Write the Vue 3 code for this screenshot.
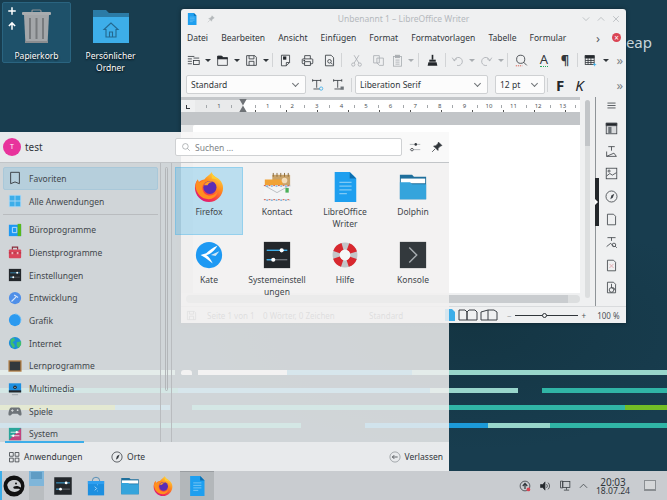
<script setup>
const ic = {
  trash: '<rect x="11" y="1" width="9" height="3" rx="1" fill="none" stroke="#8d9194" stroke-width="1.2"/><rect x="1" y="3" width="29" height="3" rx="1" fill="#a9acaf"/><path d="M3 6h25l-1.4 28H4.4z" fill="#a3a6a9"/><path d="M4 32h23v2H4z" fill="#8a8d90"/><path d="M8 9h2v21H8zM14.500 9h2v21h-2zM21 9h2v21h-2z" fill="#787b7e"/>',
  home: '<path d="M1 1h13l3 3h20v29H1z" fill="#2b7ba6"/><path d="M1 7h13l3-3h20v3H1z" fill="#2b7ba6"/><path d="M1 8h36v26H1z" fill="#3daee9"/><path d="M19 14l-7 6.500h2V28h10v-7.500h2zM17.500 28v-5h3v5" fill="none" stroke="#24688f" stroke-width="1.100"/>',
  firefox: '<defs><linearGradient id="ffg" x1="0.85" y1="0.05" x2="0.25" y2="1"><stop offset="0" stop-color="#ffe04a"/><stop offset=".4" stop-color="#ff8a1c"/><stop offset=".75" stop-color="#f5364e"/><stop offset="1" stop-color="#d8147f"/></linearGradient></defs><path d="M19 0c0 4 5 5 8 8 3 3 4 6 4 9 0 8-6.700 15-15 15S1 25 1 17c0-3 1-7 3-9l1 3c2-2 4-3 6-3 2-3 6-5 8-8z" fill="url(#ffg)"/><path d="M19 1c1 3 5 5 8 8-2-1-5-2-8-2z" fill="#ffcf33"/><path d="M1.500 15C2 12 3 9.500 4 8l1.500 3.500C8 9.500 11 9 14 9.500 10.500 11 8.500 14 9 18c.5 4 4 7 8 7 3 0 6-1.500 8-4-1 5-5 8-9.500 8C8 29 2.500 23 1.500 15z" fill="#ff8f1f"/><circle cx="17" cy="16.500" r="7" fill="#5a2db5"/><path d="M10.500 14c2-3.500 6-5 10-3.500-3 .5-5 1.500-6 3.500z" fill="#ff9d26"/>',
  kontact: '<path d="M11 3h19v12H11z" fill="#c9a36a"/><path d="M12 1v4M16 1v4M20 1v4M24 1v4M28 1v4" stroke="#8a6a3a" stroke-width="1"/><path d="M3 8h17l2 2v6H3z" fill="#f0a235"/><circle cx="24" cy="9" r="3" fill="#f3dcb8"/><rect x="2" y="14" width="28" height="16" fill="#f3f4f5"/><path d="M2 14l14 8 14-8" fill="none" stroke="#b9bdc0"/><path d="M2 14.500h28M2 29.500h28" stroke="#d2553f" stroke-dasharray="2 3"/><path d="M2 15h28M2 30h28" stroke="#3d8fd0" stroke-dasharray="2 3" stroke-dashoffset="2.500"/><rect x="25" y="17" width="3.500" height="5" fill="#4bb05a"/>',
  writer: '<path d="M5 0h16l7 7v25H5z" fill="#1e9fef"/><path d="M21 0l7 7h-7z" fill="#0b6fb0"/><path d="M10 11h13M10 15h13M10 19h13M10 23h8" stroke="#7fc9f5" stroke-width="1.400"/>',
  dolphin: '<path d="M2 3h13l2 2h13v24H2z" fill="#1f6f9c"/><path d="M3 7h26v5H3z" fill="#fff"/><path d="M2 11h11l2 2h15v16H2z" fill="#35a4dc"/>',
  kate: '<circle cx="16" cy="16" r="14" fill="#1d99f3"/><path d="M25 6c-5 2-9 5-12 8l-6 2 5 3 8 6c-2-4-4-7-7-9 5-1 9-5 12-10z" fill="#fff"/><path d="M27 12l-9 4 5 1z" fill="#d0e6f5"/>',
  sliders: '<rect x="2" y="2" width="28" height="28" fill="#23272b"/><path d="M5 11h22" stroke="#3daee9" stroke-width="1.500"/><path d="M5 21h22" stroke="#6b7075" stroke-width="1.500"/><path d="M5 21h9" stroke="#3daee9" stroke-width="1.500"/><circle cx="21" cy="11" r="2.200" fill="#fff"/><circle cx="12" cy="21" r="2.200" fill="#fff"/>',
  help: '<circle cx="16" cy="16" r="9.500" fill="none" stroke="#c3c6c9" stroke-width="7.500"/><circle cx="16" cy="16" r="9.500" fill="none" stroke="#d8282f" stroke-width="7.500" stroke-dasharray="8.900 6.025" transform="rotate(18.200 16 16)"/><circle cx="16" cy="16" r="5.500" fill="#f5f6f7"/>',
  konsole: '<rect x="2" y="2" width="28" height="28" fill="#33393d"/><path d="M12 8l8 8-8 8" fill="none" stroke="#a8adb1" stroke-width="1.500"/>',
  store: '<path d="M3 8h26v23H3z" fill="#1d8fe0"/><path d="M3 8h26v5H3z" fill="#2e9ff0"/><path d="M10 8a6 6 0 0 1 12 0" fill="none" stroke="#1a6ea8"/><path d="M14 17l3 3-3 3M18 14h1M18 24h1" fill="none" stroke="#cfeafc" stroke-width="1.200"/>',
  bookmark: '<path d="M3 1.500h10v13l-5-2-5 2z" fill="none" stroke="#3c4146" stroke-width="1.100"/>',
  all: '<rect x="1" y="1" width="14" height="14" fill="#a7d6f3"/><path d="M2 2h5.500v5.500H2zM8.500 2H14v5.500H8.500zM2 8.500h5.500V14H2zM8.500 8.500H14V14H8.500z" fill="#3daee9"/>',
  office: '<rect x="1" y="2" width="14" height="13" fill="#1d99f3"/><path d="M11 1h4v14h-4z" fill="#58b81d"/><path d="M5 5h5v6H5z" fill="none" stroke="#c9e6fb"/>',
  tools: '<rect x="1" y="5" width="14" height="10" rx="1" fill="#d9455a"/><path d="M5 5V2.500h6V5" fill="none" stroke="#8b2c3a" stroke-width="1.300"/><path d="M1 9h14" stroke="#a8303f"/><rect x="4" y="8" width="2" height="2.500" fill="#f0b4bc"/><rect x="10" y="8" width="2" height="2.500" fill="#f0b4bc"/>',
  dev: '<circle cx="8" cy="8" r="7" fill="#4f8fe8"/><path d="M4 12l5-5M7 4.500l4.500 3" stroke="#d6e6fb" stroke-width="1.400"/>',
  graphics: '<circle cx="8" cy="8" r="7" fill="#2b9af0"/><path d="M8 1a7 7 0 0 1 6 10" fill="none" stroke="#7cc6f7"/>',
  internet: '<circle cx="8" cy="8" r="7" fill="#1b8fd8"/><path d="M3 4l4-2 1 3-3 2 2 2 1 3-2 2-3-5zM10 7l5-1 0 4-3 4-2-3z" fill="#3fbf6e"/>',
  edu: '<rect x="0.500" y="1.500" width="15" height="13" fill="#b07d45"/><rect x="2" y="3" width="12" height="10" fill="#33393d"/>',
  media: '<rect x="1" y="1.500" width="14" height="10" fill="#1d8fe0"/><rect x="1" y="9.500" width="14" height="2.500" fill="#23272b"/><circle cx="8" cy="6" r="2" fill="#23272b"/><circle cx="8" cy="6" r=".7" fill="#fff"/><path d="M4.500 14.500h7" stroke="#9aa0a5"/>',
  games: '<path d="M4 4h8c2 0 3 3 3.500 7 .2 2-1.500 3-3 1.500L11 11H5l-1.500 1.500c-1.500 1.500-3.200.5-3-1.500C1 7 2 4 4 4z" fill="#6e7479"/><path d="M3.500 7.500h3M5 6v3" stroke="#d5d8da"/><circle cx="11" cy="7" r="1" fill="#d5d8da"/>',
  system: '<rect x="1" y="1" width="14" height="14" fill="#2aa59a"/><path d="M15 1v14H1z" fill="#c2447e"/><path d="M3 6h10M3 10h10" stroke="#e6eef0"/><circle cx="10" cy="6" r="1.300" fill="#fff"/><circle cx="6" cy="10" r="1.300" fill="#fff"/>',
  search: '<circle cx="7" cy="7" r="4.500"/><path d="M10.300 10.300L14 14"/>',
  filter: '<path d="M1 4.500h14M1 11.500h14" stroke="#9ea3a7"/><circle cx="9" cy="4.500" r="1.700" fill="#31363b" stroke="none"/><circle cx="4" cy="11.500" r="1.700" fill="#fff" stroke="#31363b"/>',
  pin: '<path d="M10 1.500l4.500 4.500-2 .8-3 3-.2 2.700-5.800-5.800 2.700-.2 3-3z" fill="currentColor"/><path d="M5.500 10.500L1.500 14.500"/>',
  grid: '<path d="M2 2h5v5H2zM9.500 2h5v5h-5zM2 9.500h5v5H2zM9.500 9.500h5v5h-5z"/>',
  compass: '<circle cx="8" cy="8" r="6.800"/><path d="M11.500 4.500l-2 5-3 2 1.500-5z" fill="currentColor" stroke="none"/>',
  logout: '<circle cx="8" cy="8" r="6.800" stroke="#8f9498"/><path d="M11.500 8h-7M7 5.500L4.500 8 7 10.500"/>',
  styles: '<path d="M1 3h8M1 6h5M1 9h5M1 12h5"/><rect x="8" y="8" width="7" height="5"/><path d="M8 5h7"/>',
  open: '<path d="M2 3h5l1.500 1.500H14V14H2z"/><path d="M2 2.500h5l2 2h5V6H2z" fill="#23272b"/>',
  save: '<path d="M2 2h10l2 2v10H2z"/><path d="M5 2v4h6V2M5 14V9h6v5"/>',
  pdf: '<path d="M3 1.500h10v9l-4 4H3z"/><path d="M5 3h4v4H5z" fill="#23272b" stroke="none"/><path d="M9 14.500v-4h4" />',
  print: '<path d="M4.500 6V2h7v4"/><rect x="1.500" y="6" width="13" height="6" rx="1"/><rect x="4.500" y="9.500" width="7" height="4.500" fill="#eff0f1"/><path d="M3 8h2" stroke-width="1.600"/>',
  preview: '<path d="M3 1.500h7l3 3v10H3z"/><circle cx="8" cy="9" r="2.200"/><path d="M9.800 10.800l2 2"/>',
  cut: '<circle cx="4" cy="13" r="2"/><circle cx="12" cy="13" r="2"/><path d="M5 11.300L11 1.500M11 11.300L5 1.500"/>',
  copy: '<path d="M2 2h7l0 9H2z"/><path d="M6 5h8v9H9l-3-3z"/>',
  paste: '<rect x="3" y="3" width="10" height="12"/><rect x="5.500" y="1.500" width="5" height="3" fill="currentColor"/><path d="M5.500 7.500h5M5.500 10h5M5.500 12.500h5"/>',
  brush: '<path d="M7 1h2v6H7z" fill="#23272b" stroke="none"/><path d="M4 7h8v2.500H4z" fill="#23272b" stroke="none"/><path d="M3 10h10l1 4.500H2z" fill="#23272b" stroke="none"/>',
  undo: '<path d="M4 8.500a5 5 0 1 1 3.500 5.500M1.500 4.500L4 8.500l3.500-3"/>',
  redo: '<path d="M12 8.500A5 5 0 1 0 8.500 14M14.500 4.500L12 8.500l-3.500-3"/>',
  find: '<circle cx="7" cy="6.500" r="5"/><path d="M10.500 10L14.500 14"/><path d="M1 14.500h8" stroke="#d84a3a" stroke-dasharray="1.500 1"/>',
  table: '<rect x="1.500" y="2" width="11" height="11"/><path d="M1.500 2h11v3h-11z" fill="#23272b"/><path d="M5 5v8M8.500 5v8M1.500 8h11M1.500 10.500h11"/><path d="M11 13h4M13 11v4" stroke="#3daee9"/>',
  tclear: '<path d="M2 3h10M7 3v9M3 13.500h8"/><path d="M2 1.500v3M12 1.500v3"/><circle cx="12.500" cy="13" r="2" stroke="#3daee9"/>',
  tapply: '<path d="M2 3h10M7 3v9M3 13.500h8"/><path d="M2 1.500v3M12 1.500v3"/><rect x="10.500" y="10.500" width="4" height="4" fill="#6e7479" stroke="none"/>',
  dmenu: '<path d="M3 5h10M3 8h10M3 11h10"/>',
  dstyles: '<rect x="1.500" y="1.500" width="13" height="13" fill="#d9dbdd"/><path d="M1.500 1.500h13v3h-13z" fill="#23272b"/><path d="M4 6h4v8H4z" fill="#6e7479" stroke="none"/>',
  dshape: '<path d="M4 2h8M8 2v5M2 14l9-4 3 4z"/><path d="M2 8v6"/>',
  dimage: '<rect x="1.500" y="1.500" width="13" height="13"/><circle cx="5" cy="5" r="1.300"/><path d="M2 11l4-3 3 2 5-3"/>',
  dpage: '<path d="M3 1.500h7.500L13 4v10.500H3z"/>',
  dfind: '<path d="M3 2h10M8 2v4M2 13l5-4 4 4"/><circle cx="11" cy="11" r="2.200"/><path d="M12.500 12.500l2 2"/>',
  dpdf: '<path d="M3 1.500h7.500L13 4v10.500H3z"/><path d="M5.500 6l5 5M5.500 11l5-5" stroke="#e0a0a8"/>',
  dacc: '<path d="M3 1.500h7.500L13 4v10.500H3z"/><circle cx="8" cy="11" r="2.800"/><path d="M8 3.500v5h3l1.500 3"/>',
  volume: '<path d="M2 6h3l3-3.500v11L5 10H2z" fill="#23272b"/><path d="M10 5.500a3.500 3.500 0 0 1 0 5M12 3.500a6 6 0 0 1 0 9"/>',
  net: '<rect x="5" y="2" width="9.500" height="8"/><path d="M2 1.500h3v9H2zM10 10v3M6.500 13.500h7"/>',
  update: '<circle cx="8" cy="8" r="6.500"/><path d="M8 12V5M5 8l3-3.500L11 8" stroke-width="1.600"/><circle cx="12.500" cy="12.500" r="2.500" fill="#da4453" stroke="none"/>'
}

const wallpaper = [
  [[175, '#98d6cb'], [23, 'transparent'], [89, '#ffffff'], [125, '#45b0d6'], [255, '#98d6cb']],
  [[178, '#30b5a6'], [252, '#45b0d6'], [88, '#98d6cb'], [24, 'transparent'], [125, '#30b5a6']],
  [[115, '#98c02a'], [55, '#45b0d6'], [22, 'transparent'], [433, '#30b5a6'], [42, '#72bd26']],
  [[40, '#1c9ad8'], [261, '#30b5a6'], [64, 'transparent'], [123, '#1c9ad8'], [62, '#98d6cb'], [117, '#30b5a6']]
]

const menuItems = ['Datei', 'Bearbeiten', 'Ansicht', 'Einfügen', 'Format', 'Formatvorlagen', 'Tabelle', 'Formular']

const tools = [
  { i: 'styles', w: 20 }, { a: 1, w: 9 }, { i: 'open', w: 20 }, { a: 1, w: 9 }, { i: 'save', w: 20 }, { a: 1, w: 9 },
  { s: 1, w: 5 }, { i: 'pdf', w: 21 }, { i: 'print', w: 22 }, { i: 'preview', w: 22 }, { s: 1, w: 2 },
  { g: 1, w: 2 }, { i: 'cut', w: 24, off: 1 }, { i: 'copy', w: 20, off: 1 }, { i: 'paste', w: 18, off: 1 }, { a: 1, w: 10, off: 1 },
  { s: 1, w: 4 }, { i: 'brush', w: 24 }, { s: 1, w: 2 }, { i: 'undo', w: 22, off: 1 }, { a: 1, w: 8, off: 1 },
  { i: 'redo', w: 20, off: 1 }, { a: 1, w: 10, off: 1 }, { s: 1, w: 2 }, { i: 'find', w: 26 },
  { t: 'A', w: 20, cls: 'font-a' }, { t: '¶', w: 22, cls: 'pilcrow' }, { s: 1, w: 2 }, { i: 'table', w: 24 }, { a: 1, w: 8 }
]

const rulerNums = [1, 2, 3, 4, 5, 6, 7, 8, 9, 10, 11, 12, 13]
const deck = ['dmenu', 'dstyles', 'dshape', 'dimage', 'compass', 'dpage', 'dfind', 'dpdf', 'dacc']

const cats = [
  { t: 'Favoriten', i: 'bookmark', on: true },
  { t: 'Alle Anwendungen', i: 'all', line: true },
  { t: 'Büroprogramme', i: 'office' },
  { t: 'Dienstprogramme', i: 'tools' },
  { t: 'Einstellungen', i: 'sliders', big: true },
  { t: 'Entwicklung', i: 'dev' },
  { t: 'Grafik', i: 'graphics' },
  { t: 'Internet', i: 'internet' },
  { t: 'Lernprogramme', i: 'edu' },
  { t: 'Multimedia', i: 'media' },
  { t: 'Spiele', i: 'games' },
  { t: 'System', i: 'system' }
]

const apps = [
  { t: 'Firefox', i: 'firefox', on: true },
  { t: 'Kontact', i: 'kontact' },
  { t: 'LibreOffice Writer', i: 'writer' },
  { t: 'Dolphin', i: 'dolphin' },
  { t: 'Kate', i: 'kate' },
  { t: 'Systemeinstellungen', i: 'sliders' },
  { t: 'Hilfe', i: 'help' },
  { t: 'Konsole', i: 'konsole' }
]

const taskbar = ['sliders', 'store', 'dolphin', 'firefox']
</script>

<template>
  <div class="desktop">
    <div class="stripes">
      <div v-for="(row, r) in wallpaper" :key="r" class="stripe">
        <i v-for="(seg, s) in row" :key="s" :style="{ width: seg[0] + 'px', background: seg[1] }"></i>
      </div>
    </div>
    <span class="blob"></span>
    <span class="leap">eap</span>

    <div class="desk-icons">
      <div class="desk-icon selected">
        <div class="hover-btns">
          <svg viewBox="0 0 16 16" class="hb"><path d="M8 2v12M2 8h12" stroke="#fff" stroke-width="2.400" /></svg>
          <svg viewBox="0 0 16 16" class="hb"><path d="M8 14V4M3 8l5-5 5 5" fill="none" stroke="#fff" stroke-width="2.400" /></svg>
        </div>
        <svg class="trash" viewBox="0 0 31 36" v-html="ic.trash"></svg>
        <span>Papierkorb</span>
      </div>
      <div class="desk-icon">
        <svg class="homefolder" viewBox="0 0 38 34" v-html="ic.home"></svg>
        <span>Persönlicher Ordner</span>
      </div>
    </div>

    <section class="writer">
      <div class="titlebar">
        <svg class="i12" viewBox="0 0 32 32" v-html="ic.writer"></svg>
        <svg class="i8 line pin-dim" viewBox="0 0 16 16" v-html="ic.pin"></svg>
        <span class="wintitle">Unbenannt 1 – LibreOffice Writer</span>
        <div class="winbtns">
          <svg viewBox="0 0 10 10"><path d="M1 3l4 4 4-4" /></svg>
          <svg viewBox="0 0 10 10"><path d="M1 7l4-4 4 4" /></svg>
          <svg viewBox="0 0 10 10"><path d="M1.500 1.500l7 7M8.500 1.500l-7 7" /></svg>
        </div>
      </div>
      <div class="menubar">
        <span v-for="m in menuItems" :key="m">{{ m }}</span>
        <b class="more">›</b>
        <span class="doc-close">×</span>
      </div>
      <div class="toolbar">
        <template v-for="(t, n) in tools" :key="n">
          <span class="tool" :class="{ off: t.off }" :style="{ width: t.w + 'px' }">
            <svg v-if="t.i" class="i13 line" viewBox="0 0 16 16" v-html="ic[t.i]"></svg>
            <i v-else-if="t.a" class="arrow"></i>
            <i v-else-if="t.s" class="sep"></i>
            <em v-else-if="t.t" :class="t.cls">{{ t.t }}</em>
          </span>
        </template>
        <span class="chev">»</span>
      </div>
      <div class="formatbar">
        <div class="combo c-style">Standard<i></i></div>
        <svg class="i13 line first-t" viewBox="0 0 16 16" v-html="ic.tclear"></svg>
        <svg class="i13 line second-t" viewBox="0 0 16 16" v-html="ic.tapply"></svg>
        <i class="sep"></i>
        <div class="combo c-font">Liberation Serif<i></i></div>
        <div class="combo c-size">12 pt<i></i></div>
        <i class="sep"></i>
        <b class="bold">F</b>
        <em class="ital">K</em>
        <span class="chev">»</span>
      </div>
      <div class="work">
        <div class="doc">
          <div class="ruler">
            <span class="corner"></span>
            <div class="strip">
              <div class="rmargin">1</div>
              <div class="rrest">
                <span v-for="n in rulerNums" :key="n">{{ n }}</span>
              </div>
              <svg class="hourglass" viewBox="0 0 8 14"><path d="M0 0h8L4 7l4 7H0l4-7z" fill="#6e7276" /></svg>
            </div>
          </div>
          <div class="graystrip"></div>
          <div class="paper"><div class="page"></div></div>
          <div class="hscroll"><i></i></div>
        </div>
        <div class="vscroll"><i></i></div>
        <div class="deck">
          <svg v-for="d in deck" :key="d" class="i13 line" viewBox="0 0 16 16" v-html="ic[d]"></svg>
          <span class="handle"><i></i></span>
        </div>
      </div>
      <div class="status">
        <svg class="i11 line st-save" viewBox="0 0 16 16" v-html="ic.save"></svg>
        <span class="st1">Seite 1 von 1</span>
        <span class="st2">0 Wörter, 0 Zeichen</span>
        <span class="st3">Standard</span>
        <svg class="st-single" viewBox="0 0 10 12"><path d="M0 0h7l3 3v9H0z" fill="#3daee9" /></svg>
        <svg class="st-views" viewBox="0 0 40 12"><path d="M1 1h6l2 2v8H1zM9 3l2-2h6l2 2v8H9zM23 3l7-2v10l-7 0zM30 1h6l3 2v8h-9" fill="none" stroke="#3c4146" /></svg>
        <span class="zm">−</span>
        <div class="slider"><i></i></div>
        <span class="zm plus">+</span>
        <span class="pct">100 %</span>
      </div>
    </section>

    <section class="kickoff">
      <header class="k-head">
        <span class="avatar">T</span>
        <span class="user">test</span>
        <div class="search">
          <svg class="i10 soft" viewBox="0 0 16 16" v-html="ic.search"></svg>
          <span>Suchen ...</span>
        </div>
        <svg class="i12 dark filter" viewBox="0 0 16 16" v-html="ic.filter"></svg>
        <svg class="i12 dark pinbtn" viewBox="0 0 16 16" v-html="ic.pin"></svg>
      </header>
      <div class="k-body">
        <nav class="cats">
          <template v-for="c in cats" :key="c.t">
            <div class="cat" :class="{ on: c.on }">
              <svg class="i14" :viewBox="c.big ? '0 0 32 32' : '0 0 16 16'" v-html="ic[c.i]"></svg>
              <span>{{ c.t }}</span>
            </div>
            <hr v-if="c.line" />
          </template>
        </nav>
        <div class="k-scroll"><i></i></div>
        <div class="apps">
          <div v-for="a in apps" :key="a.t" class="app" :class="{ on: a.on }">
            <svg class="i30" viewBox="0 0 32 32" v-html="ic[a.i]"></svg>
            <span>{{ a.t }}</span>
          </div>
        </div>
      </div>
      <footer class="k-foot">
        <div class="tab active">
          <svg class="i12 dark" viewBox="0 0 16 16" v-html="ic.grid"></svg>
          <span>Anwendungen</span>
        </div>
        <div class="tab">
          <svg class="i12 dark" viewBox="0 0 16 16" v-html="ic.compass"></svg>
          <span>Orte</span>
        </div>
        <div class="tab leave">
          <svg class="i12 dark" viewBox="0 0 16 16" v-html="ic.logout"></svg>
          <span>Verlassen</span>
        </div>
      </footer>
    </section>

    <footer class="panel">
      <span class="launcher">
        <svg viewBox="0 0 22 22"><circle cx="11" cy="11" r="10.500" fill="#111" /><path d="M4 10.500C5 6 9 4.500 12.500 5c4 .6 6 4 5.500 7.500-2-1.500-5-2-7-1-1 .5-1 2 .5 2.200 2 .3 3.500-.5 5.500.5-2 2.500-5 3.300-8 2.300-3-1-4.500-3.500-4.500-6z" fill="#c9cccf" /><circle cx="13" cy="8.500" r="1" fill="#111" /></svg>
      </span>
      <div class="pager"><i class="cur"><u></u></i><i></i></div>
      <span v-for="b in taskbar" :key="b" class="task">
        <svg class="i20" viewBox="0 0 32 32" v-html="ic[b]"></svg>
      </span>
      <span class="task current">
        <svg class="i20" viewBox="0 0 32 32" v-html="ic.writer"></svg>
      </span>
      <div class="tray">
        <svg class="i12 dark" viewBox="0 0 16 16" v-html="ic.update"></svg>
        <svg class="i12 dark" viewBox="0 0 16 16" v-html="ic.volume"></svg>
        <svg class="i12 dark" viewBox="0 0 16 16" v-html="ic.net"></svg>
        <svg class="caret" viewBox="0 0 10 6"><path d="M1 5l4-4 4 4" fill="none" stroke="#4d5257" /></svg>
        <div class="clock"><b>20:03</b><span>18.07.24</span></div>
        <span class="showdesk"></span>
      </div>
    </footer>
  </div>
</template>

<style scoped>
.desktop {
  position: relative;
  width: 667px;
  height: 500px;
  overflow: hidden;
  background: radial-gradient(ellipse 260px 120px at 470px 330px, #143543, transparent), #183d4f;
  font-family: "Noto Sans", sans-serif;
  font-size: 8.500px;
  color: #31363b;
}

svg {
  display: block;
  flex: none;
}
.i8 { width: 8px; height: 8px; }
.i10 { width: 10px; height: 10px; }
.i11 { width: 11px; height: 11px; }
.i12 { width: 12px; height: 12px; }
.i13 { width: 13px; height: 13px; }
.i14 { width: 14px; height: 14px; }
.i20 { width: 20px; height: 20px; }
.i30 { width: 30px; height: 30px; }
.line, .dark, .soft {
  fill: none;
  stroke: currentColor;
  stroke-width: 1;
}
.soft { color: #8b9094; }
.dark { color: #31363b; }

.stripes {
  position: absolute;
  left: 0;
  top: 370px;
  display: flex;
  flex-direction: column;
  gap: 12.500px;
}
.stripe {
  display: flex;
  height: 5px;
}
.stripe i { display: block; flex: none; }
.blob {
  position: absolute;
  left: 181px;
  top: 370px;
  width: 11px;
  height: 5px;
  border-radius: 5px 5px 1px 3px;
  background: #fff;
}
.leap {
  position: absolute;
  right: 15px;
  top: 32px;
  font-size: 15px;
  color: #c8d6db;
}

.desk-icons {
  position: absolute;
  left: 2px;
  top: 2px;
  display: flex;
  gap: 5px;
}
.desk-icon {
  position: relative;
  width: 69px;
  height: 61px;
  box-sizing: border-box;
  padding-top: 6px;
  display: flex;
  flex-direction: column;
  align-items: center;
  text-align: center;
  color: #fff;
  line-height: 11.500px;
  text-shadow: 0 1px 2px #000;
  border: 1px solid transparent;
  border-radius: 2px;
}
.desk-icon.selected {
  background: rgba(61, 174, 233, 0.18);
  border-color: #2a6480;
}
.trash { width: 31px; height: 36px; margin-bottom: 5px; }
.homefolder { width: 38px; height: 34px; margin-bottom: 7px; }
.hover-btns {
  position: absolute;
  left: 4px;
  top: 3px;
  display: flex;
  flex-direction: column;
  gap: 5px;
}
.hb { width: 10px; height: 10px; }

.writer {
  position: absolute;
  left: 181px;
  top: 9px;
  width: 445px;
  height: 314px;
  display: flex;
  flex-direction: column;
  background: #eff0f1;
  border-radius: 3px 3px 0 0;
  box-shadow: 0 0 4px rgba(0, 0, 0, 0.4);
}
.titlebar {
  position: relative;
  height: 19px;
  flex: none;
  display: flex;
  align-items: center;
  padding-left: 5px;
  gap: 9px;
}
.pin-dim { color: #b4b8bb; }
.wintitle {
  flex: 1;
  padding-left: 10px;
  text-align: center;
  color: #b5b9bd;
}
.winbtns {
  display: flex;
  gap: 7px;
  padding-right: 6px;
}
.winbtns svg {
  width: 8px;
  height: 8px;
  fill: none;
  stroke: #b5b9bd;
}
.menubar {
  height: 19px;
  flex: none;
  display: flex;
  align-items: center;
  padding-left: 6px;
  gap: 13.100px;
  white-space: nowrap;
}
.menubar .more {
  margin-left: auto;
  font-weight: 400;
  font-size: 13px;
  color: #5a5f64;
}
.doc-close {
  width: 9px;
  height: 9px;
  margin: 0 5px 0 -1px;
  border-radius: 50%;
  background: #da4453;
  color: #fff;
  font-size: 8px;
  line-height: 9px;
  text-align: center;
}
.toolbar {
  height: 26px;
  flex: none;
  display: flex;
  align-items: center;
  padding-left: 2px;
  color: #31363b;
}
.tool {
  flex: none;
  display: flex;
  justify-content: center;
  align-items: center;
  height: 16px;
}
.tool.off { color: #a9adb1; }
.tool em {
  font-style: normal;
  font-size: 13px;
}
.tool .font-a {
  line-height: 13px;
  border-bottom: 1px dotted #27ae60;
}
.tool .pilcrow { font-weight: 700; }
.arrow {
  width: 0;
  height: 0;
  border: 3px solid transparent;
  border-top: 3px solid currentColor;
  border-bottom: 0;
}
.sep {
  display: block;
  flex: none;
  width: 1px;
  height: 14px;
  background: #d2d4d6;
}
.chev {
  margin-left: auto;
  padding-right: 3px;
  font-size: 13px;
  color: #7e8387;
}
.formatbar {
  height: 24px;
  flex: none;
  box-sizing: border-box;
  display: flex;
  align-items: center;
  padding: 0 0 1px 5px;
}
.combo {
  box-sizing: border-box;
  height: 19px;
  padding-left: 4px;
  display: flex;
  align-items: center;
  justify-content: space-between;
  background: #fcfcfc;
  border: 1px solid #cfd1d3;
  border-radius: 2px;
}
.combo i {
  width: 4px;
  height: 4px;
  margin: 0 7px 2px 0;
  border-right: 1px solid #6e7276;
  border-bottom: 1px solid #6e7276;
  transform: rotate(45deg);
}
.c-style { width: 120px; }
.c-font { width: 133px; margin-left: 3px; }
.c-size { width: 50px; margin: 0 2px 0 7px; }
.first-t { margin-left: 5px; }
.second-t { margin: 0 6px 0 8px; }
.bold {
  margin-left: 8px;
  font-size: 15px;
  color: #23272b;
}
.ital {
  margin-left: 11px;
  font-size: 15px;
  color: #23272b;
}
.work {
  position: relative;
  flex: 1;
  display: flex;
  min-height: 0;
}
.doc {
  width: 399px;
  display: flex;
  flex-direction: column;
}
.ruler {
  height: 15px;
  flex: none;
  display: flex;
  box-sizing: border-box;
  border-top: 3px solid #c4c7ca;
}
.corner {
  width: 14px;
  flex: none;
  background: linear-gradient(#31363b, #31363b) 5px 5px / 1px 4px no-repeat,
    linear-gradient(#31363b, #31363b) 5px 8px / 4px 1px no-repeat;
}
.strip {
  position: relative;
  flex: 1;
  display: flex;
  background: repeating-linear-gradient(90deg, #555 0 1px, transparent 1px 31px) 29px 100% / 100% 2px no-repeat,
    repeating-linear-gradient(90deg, #a4a8ab 0 1px, transparent 1px 24.600px) 11px 50% / 100% 3px no-repeat, #fff;
  font-size: 6px;
  line-height: 12px;
  color: #4d5257;
}
.rmargin {
  width: 48px;
  flex: none;
  text-align: center;
  background: repeating-linear-gradient(90deg, #a4a8ab 0 1px, transparent 1px 24.600px) 11px 50% / 100% 3px no-repeat, #e9eaeb;
}
.rrest {
  display: flex;
  padding-left: 12.300px;
}
.rrest span {
  width: 24.600px;
  text-align: center;
}
.hourglass {
  position: absolute;
  left: 44px;
  top: -1px;
  width: 8px;
  height: 13px;
}
.graystrip {
  height: 13px;
  flex: none;
  background: #c2c5c8;
}
.paper {
  flex: 1;
  padding-left: 12px;
  display: flex;
  background: #e7e8e9;
}
.page {
  flex: 1;
  background: #fff;
  border-radius: 2px 0 0 0;
}
.hscroll {
  height: 13px;
  flex: none;
  padding: 2px 0 3px 5px;
  box-sizing: border-box;
}
.hscroll i {
  display: block;
  height: 8px;
  border-radius: 4px;
  background: linear-gradient(90deg, #c9cccf 0 97%, #dcdedf 97%);
}
.vscroll {
  width: 15px;
  flex: none;
  padding: 3px 5px 8px;
  box-sizing: border-box;
}
.vscroll i {
  display: block;
  height: 100%;
  border-radius: 3px;
  background: linear-gradient(#c2c5c8 0 46px, #dcdedf 46px);
}
.deck {
  flex: 1;
  border-left: 1px solid #8f9498;
  display: flex;
  flex-direction: column;
  align-items: center;
  padding-top: 2px;
  gap: 9.800px;
  color: #3c4146;
}
.handle {
  position: absolute;
  left: 414px;
  top: 81px;
  width: 4px;
  height: 48px;
  background: #23272b;
}
.handle i {
  display: block;
  width: 0;
  height: 0;
  margin-top: 21px;
  border: 3px solid transparent;
  border-left-color: #fff;
  border-right: 0;
}
.status {
  height: 17px;
  flex: none;
  display: flex;
  align-items: center;
  border-top: 1px solid #d9dbdd;
  box-sizing: border-box;
  color: #70757a;
  font-size: 8px;
  white-space: nowrap;
}
.st-save { margin-left: 5px; }
.st1 { margin-left: 10px; width: 56px; }
.st2 { width: 106px; }
.st3 { width: 76px; }
.st-single { width: 10px; height: 12px; }
.st-views { width: 40px; height: 12px; margin-left: 3px; }
.zm { margin-left: 9px; color: #9a9ea2; }
.plus { margin-left: 4px; color: #4d5257; }
.slider {
  position: relative;
  width: 63px;
  height: 1px;
  margin-left: 3px;
  background: #31363b;
}
.slider i {
  position: absolute;
  left: 27px;
  top: -2px;
  width: 5px;
  height: 5px;
  box-sizing: border-box;
  border: 1px solid #31363b;
  border-radius: 50%;
  background: #eff0f1;
}
.pct { margin-left: 11px; color: #4d5257; }

.kickoff {
  position: absolute;
  left: 0;
  top: 132px;
  width: 449px;
  height: 339px;
  display: flex;
  flex-direction: column;
  background: rgba(241, 240, 240, 0.85);
}
.k-head {
  height: 31px;
  flex: none;
  display: flex;
  align-items: center;
  box-sizing: border-box;
  border-bottom: 1px solid #c2c5c8;
  background: rgba(255, 255, 255, 0.5);
}
.avatar {
  width: 18px;
  height: 18px;
  margin-left: 3px;
  flex: none;
  border-radius: 50%;
  background: #e8339c;
  color: #fff;
  font-size: 7px;
  line-height: 18px;
  text-align: center;
}
.user {
  width: 150px;
  margin-left: 4px;
  font-size: 10px;
}
.search {
  width: 227px;
  height: 18px;
  box-sizing: border-box;
  padding-left: 5px;
  display: flex;
  align-items: center;
  gap: 4px;
  background: #fff;
  border: 1px solid #cfd1d3;
  border-radius: 2px;
  color: #7e8387;
}
.filter { margin-left: 7px; }
.pinbtn { margin-left: 10px; }
.k-body {
  flex: 1;
  display: flex;
  min-height: 0;
  overflow: hidden;
}
.cats {
  width: 160px;
  flex: none;
  padding: 4px 2px 0 3px;
  box-sizing: border-box;
}
.cat {
  height: 22.700px;
  box-sizing: border-box;
  display: flex;
  align-items: center;
  gap: 7px;
  padding-left: 4px;
  border: 1px solid transparent;
  border-radius: 2px;
  color: #41464b;
}
.cat.on {
  background: #b6cfdc;
  border-color: #a9c8d9;
}
.cats hr {
  height: 1px;
  margin: 2px 0 3px;
  border: 0;
  background: #b9bcbf;
}
.k-scroll {
  width: 12px;
  flex: none;
  box-sizing: border-box;
  padding: 4px 3px 51px 4px;
  border-left: 1px solid #b9bcbf;
  border-right: 1px solid #b9bcbf;
}
.k-scroll i {
  display: block;
  height: 100%;
  box-sizing: border-box;
  border: 1px solid #b3b6b9;
  border-radius: 3px;
}
.apps {
  flex: 1;
  display: grid;
  grid-template-columns: repeat(4, 68px);
  grid-auto-rows: 68px;
  padding: 4px 0 0 3px;
}
.app {
  box-sizing: border-box;
  padding: 4px 3px 0;
  display: flex;
  flex-direction: column;
  align-items: center;
  text-align: center;
  line-height: 11.500px;
  overflow-wrap: anywhere;
  border: 1px solid transparent;
  color: #41464b;
}
.app.on {
  background: rgba(61, 174, 233, 0.3);
  border-color: rgba(61, 174, 233, 0.3);
}
.app svg { margin-bottom: 4px; }
.k-foot {
  height: 29px;
  flex: none;
  display: flex;
  align-items: center;
  background: rgba(255, 255, 255, 0.5);
}
.tab {
  height: 100%;
  box-sizing: border-box;
  display: flex;
  align-items: center;
  gap: 4px;
  padding-left: 3px;
}
.tab.active {
  width: 79px;
  margin-left: 5px;
  margin-right: 24px;
  box-shadow: 0 -1px 0 0 #3daee9, inset 0 1px 0 0 #3daee9;
}
.tab.leave { margin-left: auto; padding-right: 6px; }

.panel {
  position: absolute;
  left: 0;
  bottom: 0;
  width: 667px;
  height: 29px;
  display: flex;
  align-items: center;
  background: #c9ccd0;
}
.launcher {
  width: 29px;
  height: 29px;
  flex: none;
  box-sizing: border-box;
  padding: 4px 3px;
  box-shadow: inset 25px 2px 0 -23px #3daee9;
}
.launcher svg { width: 22px; height: 22px; }
.pager {
  width: 15px;
  height: 29px;
  flex: none;
  display: flex;
  flex-direction: column;
  margin-right: 2px;
}
.pager i {
  display: block;
  flex: 1;
  background: #b9bdc0;
}
.pager .cur {
  background: #7fb6da;
  padding: 1px 2px 0;
}
.pager u {
  display: block;
  height: 7px;
  background: #5f9cc4;
}
.task {
  width: 33.500px;
  height: 29px;
  flex: none;
  display: flex;
  align-items: center;
  justify-content: center;
}
.task.current {
  background: #b3b7ba;
  box-shadow: inset 0 1px 0 #9a9ea2;
}
.tray {
  margin-left: auto;
  display: flex;
  align-items: center;
  padding-right: 11px;
  gap: 8px;
}
.caret { width: 9px; height: 6px; }
.clock {
  width: 42px;
  margin-left: -4px;
  padding-top: 1px;
  display: flex;
  flex-direction: column;
  align-items: center;
  line-height: 9px;
}
.clock b { font-weight: 400; font-size: 10px; line-height: 10px; }
.clock span { font-size: 8.600px; }
.showdesk {
  width: 12px;
  height: 11px;
  margin-left: 2px;
  box-sizing: border-box;
  background: #d5d7d9;
  border: 1px solid #8a8e92;
  border-width: 1px 1px 2px;
}
</style>
